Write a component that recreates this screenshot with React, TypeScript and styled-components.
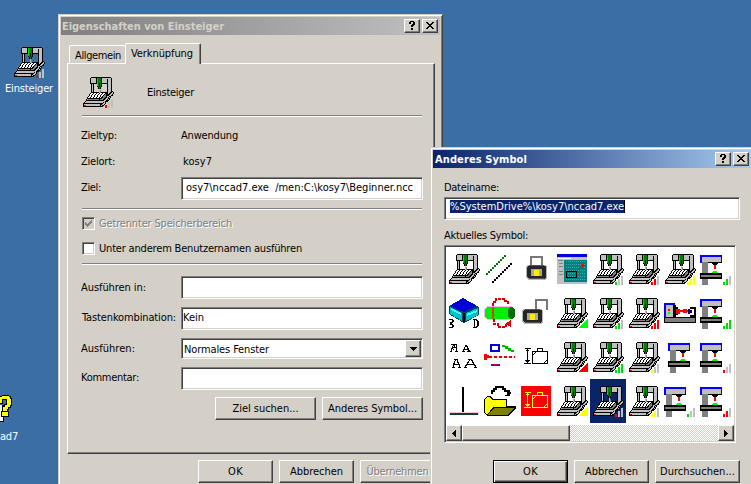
import React, { useLayoutEffect, useRef, useState } from "react";
import styled, { createGlobalStyle, css } from "styled-components";

const FACE = "#d4d0c8";
const SHADOW = "#808080";
const DARK = "#404040";

const GlobalStyle = createGlobalStyle`
  * { box-sizing: border-box; }
  html, body { margin: 0; height: 100%; overflow: hidden; background: #3b6ea5; }
  body {
    font: 11px/13px "DejaVu Sans Condensed", "DejaVu Sans", sans-serif;
    font-stretch: condensed;
    color: #000;
  }
`;

/* ---------- text ---------- */

const TextSpan = styled.span<{ $tone?: "disabled" | "light" | "selected" }>`
  display: inline-block;
  white-space: pre;
  flex: none;
  height: 13px;
  ${(p) => p.$tone === "disabled" && css`color: ${SHADOW}; text-shadow: 1px 1px 0 #fff;`}
  ${(p) => p.$tone === "light" && css`color: #fff;`}
  ${(p) => p.$tone === "selected" && css`color: #fff; background: #0a246a; border-right: 1px solid #000;`}
`;

interface TextProps {
  w: number;
  children: string;
  tone?: "disabled" | "light" | "selected";
}

/* Spreads or tightens the letters so that the caption fills the given width. */
function Text({ w, children, tone }: TextProps) {
  const ref = useRef<HTMLSpanElement>(null);
  const [tracking, setTracking] = useState(0);
  useLayoutEffect(() => {
    if (ref.current) {
      setTracking((w - ref.current.getBoundingClientRect().width) / children.length);
    }
  }, [w, children]);
  return (
    <TextSpan ref={ref} $tone={tone} style={{ letterSpacing: tracking }}>
      {children}
    </TextSpan>
  );
}

/* ---------- pixel icons ---------- */

const Icon = styled.svg`
  display: block;
  flex: none;
  shape-rendering: crispEdges;
`;

const PALETTE: Record<string, string> = {
  K: "#000", g: "#c0c0c0", w: "#fff", d: "#808080", n: "#008000", l: "#00e000", r: "#f00", y: "#ff0",
};

function Bitmap({ rows, x = 0, y = 0 }: { rows: string[]; x?: number; y?: number }) {
  const runs: React.ReactNode[] = [];
  rows.forEach((row, j) => {
    let i = 0;
    while (i < row.length) {
      const c = row[i];
      let n = 1;
      while (row[i + n] === c) n++;
      if (c !== ".") runs.push(<rect key={`${i}-${j}`} x={x + i} y={y + j} width={n} height={1} fill={PALETTE[c]} />);
      i += n;
    }
  });
  return <>{runs}</>;
}

const MACHINE = [
  "................................",
  ".........KKKKKKKKKKKKKKKKKKKK...",
  "........KgggggKlnnnKgggggggggK..",
  "........KgggggKlnnnKgggggKgggK..",
  "........KgggggKlnnnKgggggKgggK..",
  "........KgggggKlnnnKgggggKgggK..",
  "........KgggggKlnnnKgggggKgggK..",
  "........KKKKKKKlnKnKKKKKKKgggK..",
  ".........KgK...lnKnK.....KgggK..",
  ".........KgK...lnKnK.....KgggK..",
  ".........KgK...KnKnK.....KgggK..",
  ".........KgK....KnK......KgggK..",
  ".........KgK....KnK......KgggK..",
  ".........KgK.....g.......KgggK..",
  ".........KgK.....gd......KgggK..",
  ".........KgK.....gd......KgggKK.",
  ".........KKKKKKKKgdKKKKKKKggKKgK",
  "........KwwKwwKwwKwwKwwKKKgKKggK",
  ".......KwwKwwKwwKwwKwwKdKKKKggK.",
  ".......KwKwwKwwKwwKwwKddKKKggKK.",
  "......KwwKwwKwwKwwKwKdddKggKK...",
  ".....KwwKwwKwwKwwKwKKddKKgKgK...",
  ".....KKKKKKKKKKKKKKKddKKggKK....",
  "....KgdddddddddddKdddKKggKgK....",
  "....KKKKKKKKKKKKKKKKKKggKKK.....",
  "...KgggggggggggggggggggKKK......",
  "..KggggggggggggggggggKgK........",
  ".KKKKKKKKKKKKKKKKKKKKggK........",
  ".KggggggggggggggggKKggK.........",
  ".KrrggggggggggggggKgKK..........",
  ".KKKKKKKKKKKKKKKKKKKK...........",
];

function Bars({ colors }: { colors: string }) {
  return (
    <>
      <rect x="23" y="29" width="2" height="3" fill={PALETTE[colors[0]]} />
      <rect x="26" y="26" width="2" height="6" fill={PALETTE[colors[1]]} />
      <rect x="29" y="23" width="2" height="9" fill={PALETTE[colors[2]]} />
    </>
  );
}

function Machine({ bars, corner }: { bars?: string; corner?: string }) {
  return (
    <Icon width="32" height="32" viewBox="0 0 32 32">
      <Bitmap rows={MACHINE} />
      {bars && <Bars colors={bars} />}
      {corner && <path d="M32 21V31H22Z" fill={corner} />}
    </Icon>
  );
}

function Mill({ bars, shift = 0 }: { bars?: string; shift?: number }) {
  return (
    <Icon width="32" height="32" viewBox="0 0 32 32">
      <g transform={`translate(${shift} 0)`}>
        <path d="M2 10h6v10H2zM2 26h6v6H2z" fill="#808080" />
        <path d="M0 2h22v8H0z" fill="#00f" />
        <path d="M2 4h19v5H2z" fill="#c0c0c0" />
        <path d="M2 9h20v1H2z" fill="#000" />
        <path d="M2 9h6v3H2z" fill="#808080" />
        <path d="M12 10h6v1h-1v1h-4v-1h-1z" fill="#000" />
        <path d="M14 12h2v4h-2z" fill="#f00" />
        <path d="M12 19h1v-1h4v1h1v1h-6z" fill="#0f0" />
        <path d="M0 20h22v6H0z" fill="#000" />
        <path d="M1 22h20v2H1z" fill="#808080" />
      </g>
      {bars && <Bars colors={bars} />}
    </Icon>
  );
}

function Lathe() {
  return (
    <Icon width="32" height="32" viewBox="0 0 32 32">
      <path d="M0 6h11v2H2v12H0z" fill="#00f" />
      <path d="M2 8h7v12H2z" fill="#c0c0c0" />
      <path d="M4 12h2v2H4z" fill="#f00" />
      <path d="M4 15h2v2H4z" fill="#0f0" />
      <path d="M9 8h3v2h2v8h-2v2H9zM26 10h6v10h-6v-2h4v-6h-4zM0 20h32v6H0z" fill="#000" />
      <path d="M12 12h4v1h3v-1h4v4h-4v-1h-3v2h-4zM23 13h1v2h-1z" fill="#f00" />
      <path d="M24 12h2v5h-2zM26 13h2v3h-2z" fill="#000080" />
      <path d="M1 21h30v4H1z" fill="#808080" />
    </Icon>
  );
}

function Lines() {
  return (
    <Icon width="32" height="32" viewBox="0 0 32 32">
      {Array.from({ length: 10 }, (_, i) => (
        <g key={i}>
          <rect x={2 + i * 2} y={20 - i * 2} width="2" height="2" fill="#006800" />
          <rect x={3 + i * 2} y={20 - i * 2} width="1" height="1" fill="#00a000" />
          <rect x={8 + i * 2} y={28 - i * 2} width="2" height="2" fill="#000" />
        </g>
      ))}
    </Icon>
  );
}

function Lock({ open = false }: { open?: boolean }) {
  return (
    <Icon width="32" height="32" viewBox="0 0 32 32">
      {open ? (
        <path d="M16 13V3h11v10" fill="none" stroke="#777" strokeWidth="2" />
      ) : (
        <path d="M11 13V4h11v9" fill="none" stroke="#777" strokeWidth="2" />
      )}
      <g transform={open ? "translate(-4 0)" : undefined}>
        <path d="M7 12h18l2 2v11l-2 2H8l-2-2V14z" fill="#b8b8b0" />
        <path d="M8 13h17l1 1v10l-1 2H9l-2-2V15z" fill="#252525" />
        <path d="M11 16h11v7H11z" fill="#aaa89c" />
        <path d="M14 17h5v6h-5z" fill="#ffed00" />
        <path d="M9 12h15v1H9zM9 25h15v1H9z" fill="#555" />
      </g>
    </Icon>
  );
}

function Screen() {
  return (
    <Icon width="32" height="32" viewBox="0 0 32 32">
      <path d="M1 1h30v30H1z" fill="#c0c0c0" />
      <path d="M1 1h30v3H1z" fill="#0000e0" />
      <path d="M25 2h1v1h-1zM27 2h1v1h-1zM29 2h1v1h-1z" fill="#000" />
      <path d="M2 5h13v1H2z" fill="#fff" />
      <path d="M8 7h23v22H8z" fill="#008080" />
      {Array.from({ length: 70 }, (_, i) => (
        <rect key={i} x={10 + (i % 10) * 2} y={8 + Math.floor(i / 10) * 3} width="1" height="1" fill="#40a8a8" />
      ))}
      <path d="M2 7h5v1H2zM3 10h4v1H3zM3 13h4v1H3zM3 18h4v1H3zM3 21h4v1H3z" fill="#808080" />
      <path d="M10 18.500h10.500v6H10z" fill="none" stroke="#000" />
      <path d="M21 18l5-5M26 15v-4M24.500 12.500h4" stroke="#f00" fill="none" />
    </Icon>
  );
}

function Cube() {
  return (
    <Icon width="32" height="32" viewBox="0 0 32 32">
      <path d="M15 1 31 10v8L16 26 1 17V9z" fill="#004060" />
      <path d="M15 1 29 9l-13 6L2 9z" fill="#0000d8" />
      <path d="M2 10l12 6v8L2 17zM18 16l12-5v7l-12 6z" fill="#00c0c8" />
      <path d="M3 11l10 5v2L3 13zM19 17l10-4v2l-10 4z" fill="#40ffff" />
      <path d="M15 16h2v9h-2z" fill="#000" />
      <path d="M1 22h4v1h1v2H5v1H4v1h1v1h1v2H5v1H1v-1h3v-2H2v-3h2v-2H1z" fill="#000" />
      <path fillRule="evenodd" d="M25 22h4v1h1v1h1v5h-1v1h-1v1h-4v-1h1v-7h-1zM27 23v7h1v-1h1v-5h-1v-1z" fill="#000" />
    </Icon>
  );
}

function Rotate() {
  return (
    <Icon width="32" height="32" viewBox="0 0 32 32">
      <path d="M3 9h24l4 3v7l-3 4H3l-3-3v-8z" fill="#f8b8f0" />
      <path d="M3 10h25l3 3v6l-3 3H3l-2-3v-6z" fill="#00f000" />
      <path d="M26 10h3l2 3v6l-3 3h-2l-2-3v-6z" fill="#007000" />
      <path d="M8 10h2v12H8z" fill="#c05000" />
      <path d="M9 9V5h3V2h8v2h4v3M10 22v5h4v3h8v-3h4" fill="none" stroke="#d00000" strokeWidth="1.500" strokeDasharray="3 1" />
      <path d="M27 23v7l-6-3z" fill="#e00000" />
    </Icon>
  );
}

function Letters() {
  return (
    <Icon width="32" height="32" viewBox="0 0 32 32">
      <Bitmap x={2} y={3} rows={[".KKKKKK.", "...KK.K.", "..K.K.K.", "..KKKKK.", ".KK...K.", ".K.K..K.", ".K....K.", "KK...KKK"]} />
      <Bitmap x={14} y={4} rows={["...KK....", "...KKK...", "..K..K...", "..K..KK..", ".KKKKKK..", ".K....KK.", "KKK..KKKK"]} />
      <Bitmap x={4} y={18} rows={["..KKKK...", "...K.K...", "..K..K...", "..K..KK..", ".KK...K..", ".KKKKKKK.", ".K.....K.", ".K.....K.", "KKK...KKK"]} />
      <Bitmap x={16} y={18} rows={["....KKKK.....", ".....K.KK....", "....K...K....", "...KK...KK...", "...K.....K...", "..KKKKKKKKK..", ".KK.......KK.", ".K.........K.", "KKK.......KKK"]} />
    </Icon>
  );
}

function Cutting() {
  return (
    <Icon width="32" height="32" viewBox="0 0 32 32">
      <path d="M7 4h8v6H7z" fill="none" stroke="#0000e0" strokeWidth="2" />
      <path d="M18 4h3v1h3v2h3v2h3v2h-3v-1h-3V8h-3V6h-3z" fill="#00b000" />
      <path d="M0 13h3v1h2v3H3v2H0z" fill="#f00" />
      <path d="M5 15h27v2H5z" fill="#c8f0f0" />
      <path d="M5 15h26" transform="translate(0 .5)" stroke="#e00000" strokeWidth="2" strokeDasharray="3 2" />
      <path d="M7 23h9v2H7z" fill="#601080" />
      <path d="M9 23h5v1H9z" fill="#e00000" />
    </Icon>
  );
}

function Dimension({ inverted = false }: { inverted?: boolean }) {
  return (
    <Icon width="32" height="32" viewBox="0 0 32 32">
      {inverted && <path d="M1 1h30v30H1z" fill="#f00" />}
      <g fill="none" stroke={inverted ? "#ff0" : "#000"}>
        <path d="M5 7.500h6M7.500 8v15M6 9.500h3M5 19.500h5M6 20.500h3M4 22.500h7" />
        <path d="M12.500 10.500h15v12h-15zM17 10V7.500h5V10M13 14l3-3M27 19l-3 3" />
      </g>
    </Icon>
  );
}

function Stand() {
  return (
    <Icon width="32" height="32" viewBox="0 0 32 32">
      <path d="M14 2h2v26h-2z" fill="#000" />
      <path d="M1 27h30v3H1z" fill="#f4c8ec" />
      <path d="M2 28h28v2H2z" fill="#104020" />
    </Icon>
  );
}

function Folder() {
  return (
    <Icon width="32" height="32" viewBox="0 0 32 32">
      <path d="M0 14l3-3h4l2 3h14v7h9v2l-7 8H3l-3-4z" fill="#000" />
      <path d="M1 14l2-2h3l2 3h14v7H9l-6 8-2-3z" fill="#ff0" />
      <path d="M10 23h20l-6 7H4z" fill="#808000" />
      <path d="M8 9V6h2V4h2V2h7v2h2v2h3v2h3" fill="none" stroke="#000" strokeWidth="1.500" />
      <path d="M26 5v6h-5v-1h2V9h2V5z" fill="#000" />
    </Icon>
  );
}

function HelpMark() {
  return (
    <Icon width="18" height="30" viewBox="0 0 18 30">
      <path d="M0 11h4v16H0z" fill="#fff" />
      <path d="M0 27h4v1H0zM3 23h1v5H3z" fill="#000" />
      <path d="M0 2h2V1h7v1h2v2h1v8h-1v2H9v2H8v1h1v6H1v-6h1v-6h2v-1h2V6H3v4H0z" fill="#000" />
      <path d="M0 3h2V2h7v1h1v2h1v6h-1v2H8v2H7v2H3v-4h2v-2h2V5H2v4H0zM2 18h6v4H2z" fill="#ff0" />
    </Icon>
  );
}

/* ---------- controls ---------- */

const raised = css`
  background: ${FACE};
  border: 1px solid;
  border-color: #fff ${DARK} ${DARK} #fff;
  box-shadow: inset -1px -1px 0 ${SHADOW};
`;

const sunken = css`
  border: 1px solid;
  border-color: ${SHADOW} #fff #fff ${SHADOW};
  box-shadow: inset 1px 1px 0 ${DARK}, inset -1px -1px 0 ${FACE};
`;

const Button = styled.div<{ $w: number; $default?: boolean }>`
  ${raised}
  width: ${(p) => p.$w}px;
  height: 23px;
  flex: none;
  display: flex;
  justify-content: center;
  padding-top: 4px;
  ${(p) => p.$default && css`
    border-color: #000;
    box-shadow: inset 1px 1px 0 #fff, inset -1px -1px 0 ${DARK}, inset -2px -2px 0 ${SHADOW};
  `}
`;

const GlyphButton = styled.div<{ $w: number; $h: number }>`
  ${raised}
  width: ${(p) => p.$w}px;
  height: ${(p) => p.$h}px;
  flex: none;
  display: flex;
  align-items: center;
  justify-content: center;
`;

const Field = styled.div<{ $h?: number; $pad?: number; $top?: number }>`
  ${sunken}
  background-color: #fff;
  flex: 1;
  min-width: 0;
  height: ${(p) => p.$h ?? 23}px;
  padding: ${(p) => p.$top ?? 3}px 0 0 ${(p) => p.$pad ?? 1}px;
  overflow: hidden;
`;

const ComboField = styled(Field)`
  display: flex;
  justify-content: space-between;
  padding: 1px 1px 1px 2px;
`;

const ComboText = styled.div`
  padding-top: 3px;
`;

const CheckBox = styled.div<{ $disabled?: boolean }>`
  ${sunken}
  width: 13px;
  height: 13px;
  flex: none;
  padding: 2px;
  background: ${(p) => (p.$disabled ? FACE : "#fff")};
`;

const Rule = styled.div`
  height: 2px;
  margin-right: 1px;
  background: ${SHADOW};
  border-bottom: 1px solid #fff;
  flex: none;
`;

/* ---------- windows ---------- */

const Desktop = styled.div`
  position: relative;
  width: 751px;
  height: 484px;
  overflow: hidden;
  background: #3b6ea5;
`;

const Shortcut = styled.div<{ $x: number; $y: number; $w: number; $gap: number }>`
  position: absolute;
  left: ${(p) => p.$x}px;
  top: ${(p) => p.$y}px;
  width: ${(p) => p.$w}px;
  display: flex;
  flex-direction: column;
  align-items: center;
  gap: ${(p) => p.$gap}px;
`;

const WindowFrame = styled.div<{ $x: number; $y: number; $w: number; $h: number }>`
  position: absolute;
  left: ${(p) => p.$x}px;
  top: ${(p) => p.$y}px;
  width: ${(p) => p.$w}px;
  height: ${(p) => p.$h}px;
  padding: 2px;
  background: ${FACE};
  border: 1px solid;
  border-color: ${FACE} ${DARK} ${DARK} ${FACE};
  box-shadow: inset 1px 1px 0 #fff, inset -1px -1px 0 ${SHADOW};
`;

const TitleBar = styled.div<{ $active?: boolean }>`
  height: 18px;
  display: flex;
  gap: 2px;
  padding: 2px 2px 0 1px;
  font-weight: bold;
  color: ${(p) => (p.$active ? "#fff" : FACE)};
  background: ${(p) => (p.$active ? "linear-gradient(90deg, #0a246a, #a6caf0)" : "linear-gradient(90deg, #808080, #c0c0c0)")};
`;

const TitleText = styled.div<{ $left: number }>`
  flex: 1;
  padding: 1px 0 0 ${(p) => p.$left}px;
`;

function Title({ text, w, active }: { text: string; w: number; active?: boolean }) {
  return (
    <TitleBar $active={active}>
      <TitleText $left={active ? 1 : 0}><Text w={w}>{text}</Text></TitleText>
      <GlyphButton $w={16} $h={14}>
        <Icon width="8" height="10" viewBox="0 0 8 10">
          <path d="M2 0h4v1h1v3H6v1H5v1H3V4h1V3h1V1H3v2H1V1h1zM3 7h2v2H3z" fill="#000" />
        </Icon>
      </GlyphButton>
      <GlyphButton $w={16} $h={14}>
        <Icon width="9" height="8" viewBox="0 0 9 8">
          <path d="M0 0h2v1h1v1h2V1h1V0h2v1H7v1H6v1H5v1h1v1h1v1h1v1H6V6H5V5H3v1H2v1H0V6h1V5h1V4h1V3H2V2H1V1H0z" fill="#000" />
        </Icon>
      </GlyphButton>
    </TitleBar>
  );
}

const Tabs = styled.div`
  display: flex;
  align-items: flex-end;
  height: 28px;
  padding-left: 8px;
`;

const Tab = styled.div<{ $active?: boolean }>`
  position: relative;
  width: ${(p) => (p.$active ? 76 : 56)}px;
  height: ${(p) => (p.$active ? 21 : 18)}px;
  margin-bottom: ${(p) => (p.$active ? -1 : 0)}px;
  padding: ${(p) => (p.$active ? "3px 0 0 5px" : "3px 0 0 5px")};
  background: ${FACE};
  border: 1px solid #fff;
  border-bottom: 0;
  border-radius: 2px 2px 0 0;
  ${(p) => p.$active
    ? css`z-index: 1; border-right-color: ${DARK}; box-shadow: inset -1px 0 0 ${SHADOW};`
    : css`border-right: 0;`}
`;

const Sheet = styled.div`
  width: 368px;
  height: 391px;
  margin-left: 6px;
  padding: 12px 11px 0 14px;
  border: 1px solid;
  border-color: #fff ${DARK} ${DARK} #fff;
  box-shadow: inset -1px -1px 0 ${SHADOW};
  display: flex;
  flex-direction: column;
`;

const Header = styled.div`
  display: flex;
  height: 39px;
  gap: 33px;
`;

const HeaderText = styled.div`
  padding-top: 10px;
`;

const Row = styled.div<{ $h: number }>`
  display: flex;
  height: ${(p) => p.$h}px;
  align-items: flex-start;
  flex: none;
`;

const RowLabel = styled.div<{ $top: number; $left?: number }>`
  width: 100px;
  margin-left: -1px;
  flex: none;
  padding: ${(p) => p.$top}px 0 0 ${(p) => p.$left ?? 0}px;
`;

const RowValue = styled.div<{ $top: number; $left: number }>`
  padding: ${(p) => p.$top}px 0 0 ${(p) => p.$left}px;
`;

const InputSpace = styled.div<{ $top: number }>`
  display: flex;
  flex: 1;
  padding-top: ${(p) => p.$top}px;
`;

const CheckRow = styled.div<{ $h: number; $top: number }>`
  display: flex;
  gap: 4px;
  height: ${(p) => p.$h}px;
  padding-top: ${(p) => p.$top}px;
  flex: none;
`;

const ButtonRow = styled.div<{ $left: number; $top: number }>`
  display: flex;
  gap: 6px;
  padding: ${(p) => p.$top}px 0 0 ${(p) => p.$left}px;
`;

const ChooserBody = styled.div`
  display: flex;
  flex-direction: column;
  align-items: flex-start;
  padding: 13px 0 0 11px;
`;

const FileField = styled(Field)`
  flex: none;
  width: 296px;
  margin: 3px 0 9px;
`;

const IconList = styled.div`
  ${sunken}
  width: 292px;
  height: 198px;
  margin-top: 3px;
  padding: 1px;
  background: #fff;
  display: flex;
  flex-direction: column;
  justify-content: space-between;
`;

const IconGrid = styled.div`
  display: grid;
  grid-template-columns: repeat(8, 36px);
  grid-auto-rows: 44px;
`;

const IconCell = styled.div<{ $selected?: boolean }>`
  padding: 6px 2px;
  background: ${(p) => (p.$selected ? "#0a246a" : "transparent")};
`;

const ScrollBar = styled.div`
  display: flex;
  height: 16px;
  justify-content: space-between;
  background: repeating-conic-gradient(#fff 0 25%, ${FACE} 0 50%) 0 0 / 2px 2px;
`;

const ScrollStart = styled.div`
  display: flex;
`;

const Thumb = styled.div`
  ${raised}
  width: 108px;
`;

const ICONS: React.ReactNode[] = [
  <Machine />, <Lines />, <Lock />, <Screen />, <Machine bars="lgg" />, <Machine bars="rrg" />, <Machine bars="yyy" />, <Mill bars="llg" />,
  <Cube />, <Rotate />, <Lock open />, <Machine corner="#0f0" />, <Machine bars="llg" />, <Machine bars="rrr" />, <Lathe />, <Mill bars="lll" />,
  <Letters />, <Cutting />, <Dimension />, <Machine corner="#f00" />, <Machine bars="lll" />, <Machine bars="ygg" />, <Mill shift={4} />, <Mill bars="rgg" />,
  <Stand />, <Folder />, <Dimension inverted />, <Machine corner="#ff0" />, <Machine bars="rgg" />, <Machine bars="yyg" />, <Mill bars="lgg" />, <Mill bars="rrg" />,
];

function PropertiesWindow() {
  return (
    <WindowFrame $x={58} $y={14} $w={385} $h={476}>
      <Title text="Eigenschaften von Einsteiger" w={162} />
      <Tabs>
        <Tab><Text w={46}>Allgemein</Text></Tab>
        <Tab $active><Text w={62}>Verknüpfung</Text></Tab>
      </Tabs>
      <Sheet>
        <Header>
          <Machine bars="rgg" />
          <HeaderText><Text w={47}>Einsteiger</Text></HeaderText>
        </Header>
        <Rule />
        <Row $h={26}>
          <RowLabel $top={12}><Text w={36}>Zieltyp:</Text></RowLabel>
          <RowValue $top={12} $left={0}><Text w={57}>Anwendung</Text></RowValue>
        </Row>
        <Row $h={34}>
          <RowLabel $top={12}><Text w={34}>Zielort:</Text></RowLabel>
          <RowValue $top={12} $left={2}><Text w={29}>kosy7</Text></RowValue>
        </Row>
        <Row $h={31}>
          <RowLabel $top={4}><Text w={20}>Ziel:</Text></RowLabel>
          <Field $pad={4}><Text w={227}>{"osy7\\nccad7.exe  /men:C:\\kosy7\\Beginner.ncc"}</Text></Field>
        </Row>
        <Rule />
        <CheckRow $h={25} $top={7}>
          <CheckBox $disabled>
            <Icon width="7" height="7" viewBox="0 0 7 7">
              <path d="M0 2h1v1h1v1h1V3h1V2h1V1h1V0h1v3H6v1H5v1H4v1H3v1H2V6H1V5H0z" fill="#808080" />
            </Icon>
          </CheckBox>
          <Text w={133} tone="disabled">Getrennter Speicherbereich</Text>
        </CheckRow>
        <CheckRow $h={28} $top={7}>
          <CheckBox />
          <Text w={203}>Unter anderem Benutzernamen ausführen</Text>
        </CheckRow>
        <Rule />
        <Row $h={42}>
          <RowLabel $top={16}><Text w={65}>Ausführen in:</Text></RowLabel>
          <InputSpace $top={11}><Field /></InputSpace>
        </Row>
        <Row $h={31}>
          <RowLabel $top={4} $left={1}><Text w={94}>Tastenkombination:</Text></RowLabel>
          <Field><Text w={21}>Kein</Text></Field>
        </Row>
        <Row $h={29}>
          <RowLabel $top={4}><Text w={54}>Ausführen:</Text></RowLabel>
          <ComboField $h={21}>
            <ComboText><Text w={85}>Normales Fenster</Text></ComboText>
            <GlyphButton $w={16} $h={17}>
              <Icon width="7" height="4" viewBox="0 0 7 4"><path d="M0 0h7v1H6v1H5v1H4v1H3V3H2V2H1V1H0z" /></Icon>
            </GlyphButton>
          </ComboField>
        </Row>
        <Row $h={23}>
          <RowLabel $top={4}><Text w={58}>Kommentar:</Text></RowLabel>
          <Field />
        </Row>
        <ButtonRow $left={133} $top={7}>
          <Button $w={101}><Text w={66}>Ziel suchen...</Text></Button>
          <Button $w={101}><Text w={89}>Anderes Symbol...</Text></Button>
        </ButtonRow>
      </Sheet>
      <ButtonRow $left={137} $top={6}>
        <Button $w={75}><Text w={15}>OK</Text></Button>
        <Button $w={75}><Text w={53}>Abbrechen</Text></Button>
        <Button $w={75}><Text w={62} tone="disabled">Übernehmen</Text></Button>
      </ButtonRow>
    </WindowFrame>
  );
}

function ChooserWindow() {
  return (
    <WindowFrame $x={430} $y={147} $w={324} $h={347}>
      <Title text="Anderes Symbol" w={92} active />
      <ChooserBody>
        <Text w={55}>Dateiname:</Text>
        <FileField $pad={5} $top={2}><Text w={175} tone="selected">{"%SystemDrive%\\kosy7\\nccad7.exe"}</Text></FileField>
        <Text w={84}>Aktuelles Symbol:</Text>
        <IconList>
          <IconGrid>
            {ICONS.map((icon, i) => <IconCell key={i} $selected={i === 28}>{icon}</IconCell>)}
          </IconGrid>
          <ScrollBar>
            <ScrollStart>
              <GlyphButton $w={16} $h={16}>
                <Icon width="4" height="7" viewBox="0 0 4 7"><path d="M4 0v7H3V6H2V5H1V4H0V3h1V2h1V1h1V0z" /></Icon>
              </GlyphButton>
              <Thumb />
            </ScrollStart>
            <GlyphButton $w={16} $h={16}>
              <Icon width="4" height="7" viewBox="0 0 4 7"><path d="M0 0v7h1V6h1V5h1V4h1V3H3V2H2V1H1V0z" /></Icon>
            </GlyphButton>
          </ScrollBar>
        </IconList>
        <ButtonRow $left={49} $top={17}>
          <Button $w={75} $default><Text w={15}>OK</Text></Button>
          <Button $w={75}><Text w={53}>Abbrechen</Text></Button>
          <Button $w={85}><Text w={75}>Durchsuchen...</Text></Button>
        </ButtonRow>
      </ChooserBody>
    </WindowFrame>
  );
}

export default function App() {
  return (
    <>
      <GlobalStyle />
      <Desktop>
        <Shortcut $x={0} $y={46} $w={58} $gap={4}>
          <Machine bars="rgg" />
          <Text w={48} tone="light">Einsteiger</Text>
        </Shortcut>
        <Shortcut $x={0} $y={394} $w={18} $gap={6}>
          <HelpMark />
          <Text w={18} tone="light">ad7</Text>
        </Shortcut>
        <PropertiesWindow />
        <ChooserWindow />
      </Desktop>
    </>
  );
}
